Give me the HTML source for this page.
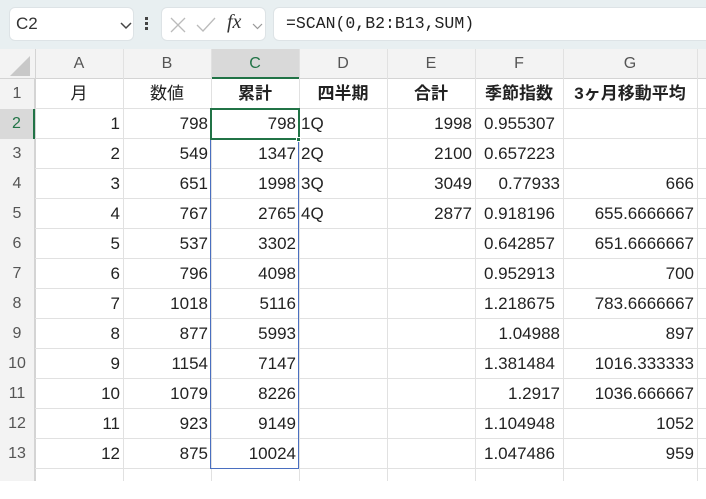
<!DOCTYPE html>
<html><head><meta charset="utf-8">
<style>
*{margin:0;padding:0;box-sizing:border-box}
body{width:706px;height:481px;overflow:hidden;background:#fff;font-family:"Liberation Sans","Noto Sans CJK JP",sans-serif;position:relative}
.top{position:absolute;left:0;top:0;width:706px;height:49px;background:#e8eff1}
.box{position:absolute;background:#fff;border:1px solid #dde3e6;border-radius:6px}
.hdr{position:absolute;top:49px;left:0;width:706px;height:30px;background:#f3f3f3;border-bottom:1px solid #d4d4d4}
.row{position:absolute;left:0;width:706px;height:30px;border-bottom:1px solid #e1e1e1}
.c{position:absolute;top:0;height:30px;line-height:30px;font-size:17px;color:#222;white-space:nowrap;padding:0 3px}
.r{text-align:right}
.l{text-align:left}
.f{text-align:left;padding-left:9px}
.ce{text-align:center}
.rh{position:absolute;left:0;top:0;width:35px;height:30px;line-height:30px;background:#f3f3f3;color:#555;font-size:16px;text-align:center;border-right:1px solid #d4d4d4}
.b{font-weight:bold}
.vl{position:absolute;top:49px;width:1px;height:432px;background:#e1e1e1}
.ch{position:absolute;top:49px;height:30px;line-height:30px;font-size:16px;color:#555;text-align:center}
</style></head><body>
<div class="top"></div>
<div class="box" style="left:9px;top:7px;width:125px;height:34px"><span style="position:absolute;left:6px;top:6px;font-size:17px;color:#333">C2</span>
<svg style="position:absolute;left:110px;top:14px" width="12" height="8"><path d="M1 1L6 6L11 1" fill="none" stroke="#444" stroke-width="1.5"/></svg></div>
<div style="position:absolute;left:145px;top:17px;width:3px;height:3px;background:#444;box-shadow:0 5px #444,0 10px #444"></div>
<div class="box" style="left:161px;top:7px;width:105px;height:34px">
<svg style="position:absolute;left:8px;top:9px" width="16" height="16"><path d="M1 1L15 15M15 1L1 15" stroke="#bbb" stroke-width="1.3"/></svg>
<svg style="position:absolute;left:34px;top:9px" width="20" height="16"><path d="M1 8L7 14L19 1" fill="none" stroke="#bbb" stroke-width="1.3"/></svg>
<span style="position:absolute;left:65px;top:3px;font-family:'Liberation Serif',serif;font-style:italic;font-size:20px;color:#333">fx</span>
<svg style="position:absolute;left:90px;top:15px" width="11" height="7"><path d="M1 1L5.5 5.5L10 1" fill="none" stroke="#999" stroke-width="1.2"/></svg></div>
<div class="box" style="left:273px;top:7px;width:440px;height:34px"><span style="position:absolute;left:12px;top:6px;font-family:'Liberation Mono',monospace;font-size:16.5px;color:#222">=SCAN(0,B2:B13,SUM)</span></div>

<div class="hdr"></div>
<svg style="position:absolute;left:10px;top:56px" width="22" height="20"><path d="M20 0L20 20L0 20Z" fill="#c8c8c8"/></svg>
<div style="position:absolute;left:211px;top:49px;width:88px;height:30px;background:#d9d9d9;border-bottom:2px solid #217346"></div>
<div class="ch" style="left:35px;width:88px">A</div>
<div class="ch" style="left:123px;width:88px">B</div>
<div class="ch" style="left:211px;width:88px;color:#217346">C</div>
<div class="ch" style="left:299px;width:88px">D</div>
<div class="ch" style="left:387px;width:88px">E</div>
<div class="ch" style="left:475px;width:88px">F</div>
<div class="ch" style="left:563px;width:134px">G</div>

<div class="vl" style="left:35px;background:#d4d4d4"></div>
<div class="vl" style="left:123px"></div><div class="vl" style="left:211px"></div><div class="vl" style="left:299px"></div>
<div class="vl" style="left:387px"></div><div class="vl" style="left:475px"></div><div class="vl" style="left:563px"></div><div class="vl" style="left:697px"></div>

<div class="row" style="top:79px"><div class="rh">1</div>
<div class="c ce" style="left:35px;width:88px">月</div><div class="c ce" style="left:123px;width:88px">数値</div>
<div class="c ce b" style="left:211px;width:88px">累計</div><div class="c ce b" style="left:299px;width:88px">四半期</div>
<div class="c ce b" style="left:387px;width:88px">合計</div><div class="c ce b" style="left:475px;width:88px">季節指数</div>
<div class="c ce b" style="left:563px;width:134px">3ヶ月移動平均</div></div>

<div class="row" style="top:109px"><div class="rh" style="background:#d9d9d9;color:#217346;border-right:2px solid #217346">2</div><div class="c r" style="left:35px;width:88px">1</div><div class="c r" style="left:123px;width:88px">798</div><div class="c r" style="left:211px;width:88px">798</div><div class="c l" style="left:299px;width:88px;padding-left:2px">1Q</div><div class="c r" style="left:387px;width:88px">1998</div><div class="c f" style="left:475px;width:88px">0.955307</div></div>
<div class="row" style="top:139px"><div class="rh">3</div><div class="c r" style="left:35px;width:88px">2</div><div class="c r" style="left:123px;width:88px">549</div><div class="c r" style="left:211px;width:88px">1347</div><div class="c l" style="left:299px;width:88px;padding-left:2px">2Q</div><div class="c r" style="left:387px;width:88px">2100</div><div class="c f" style="left:475px;width:88px">0.657223</div></div>
<div class="row" style="top:169px"><div class="rh">4</div><div class="c r" style="left:35px;width:88px">3</div><div class="c r" style="left:123px;width:88px">651</div><div class="c r" style="left:211px;width:88px">1998</div><div class="c l" style="left:299px;width:88px;padding-left:2px">3Q</div><div class="c r" style="left:387px;width:88px">3049</div><div class="c r" style="left:475px;width:88px">0.77933</div><div class="c r" style="left:563px;width:134px">666</div></div>
<div class="row" style="top:199px"><div class="rh">5</div><div class="c r" style="left:35px;width:88px">4</div><div class="c r" style="left:123px;width:88px">767</div><div class="c r" style="left:211px;width:88px">2765</div><div class="c l" style="left:299px;width:88px;padding-left:2px">4Q</div><div class="c r" style="left:387px;width:88px">2877</div><div class="c f" style="left:475px;width:88px">0.918196</div><div class="c r" style="left:563px;width:134px">655.6666667</div></div>
<div class="row" style="top:229px"><div class="rh">6</div><div class="c r" style="left:35px;width:88px">5</div><div class="c r" style="left:123px;width:88px">537</div><div class="c r" style="left:211px;width:88px">3302</div><div class="c f" style="left:475px;width:88px">0.642857</div><div class="c r" style="left:563px;width:134px">651.6666667</div></div>
<div class="row" style="top:259px"><div class="rh">7</div><div class="c r" style="left:35px;width:88px">6</div><div class="c r" style="left:123px;width:88px">796</div><div class="c r" style="left:211px;width:88px">4098</div><div class="c f" style="left:475px;width:88px">0.952913</div><div class="c r" style="left:563px;width:134px">700</div></div>
<div class="row" style="top:289px"><div class="rh">8</div><div class="c r" style="left:35px;width:88px">7</div><div class="c r" style="left:123px;width:88px">1018</div><div class="c r" style="left:211px;width:88px">5116</div><div class="c f" style="left:475px;width:88px">1.218675</div><div class="c r" style="left:563px;width:134px">783.6666667</div></div>
<div class="row" style="top:319px"><div class="rh">9</div><div class="c r" style="left:35px;width:88px">8</div><div class="c r" style="left:123px;width:88px">877</div><div class="c r" style="left:211px;width:88px">5993</div><div class="c r" style="left:475px;width:88px">1.04988</div><div class="c r" style="left:563px;width:134px">897</div></div>
<div class="row" style="top:349px"><div class="rh">10</div><div class="c r" style="left:35px;width:88px">9</div><div class="c r" style="left:123px;width:88px">1154</div><div class="c r" style="left:211px;width:88px">7147</div><div class="c f" style="left:475px;width:88px">1.381484</div><div class="c r" style="left:563px;width:134px">1016.333333</div></div>
<div class="row" style="top:379px"><div class="rh">11</div><div class="c r" style="left:35px;width:88px">10</div><div class="c r" style="left:123px;width:88px">1079</div><div class="c r" style="left:211px;width:88px">8226</div><div class="c r" style="left:475px;width:88px">1.2917</div><div class="c r" style="left:563px;width:134px">1036.666667</div></div>
<div class="row" style="top:409px"><div class="rh">12</div><div class="c r" style="left:35px;width:88px">11</div><div class="c r" style="left:123px;width:88px">923</div><div class="c r" style="left:211px;width:88px">9149</div><div class="c f" style="left:475px;width:88px">1.104948</div><div class="c r" style="left:563px;width:134px">1052</div></div>
<div class="row" style="top:439px"><div class="rh">13</div><div class="c r" style="left:35px;width:88px">12</div><div class="c r" style="left:123px;width:88px">875</div><div class="c r" style="left:211px;width:88px">10024</div><div class="c f" style="left:475px;width:88px">1.047486</div><div class="c r" style="left:563px;width:134px">959</div></div>
<div class="row" style="top:469px;border:none"><div class="rh" style="height:12px"></div></div>

<div style="position:absolute;left:210px;top:139px;width:89px;height:330px;border:1px solid #4a6fc0;border-top:none"></div>
<div style="position:absolute;left:210px;top:108px;width:90px;height:32px;border:2px solid #217346"></div>
<div style="position:absolute;left:296px;top:137px;width:5px;height:5px;background:#217346;border:1px solid #fff"></div>
</body></html>
